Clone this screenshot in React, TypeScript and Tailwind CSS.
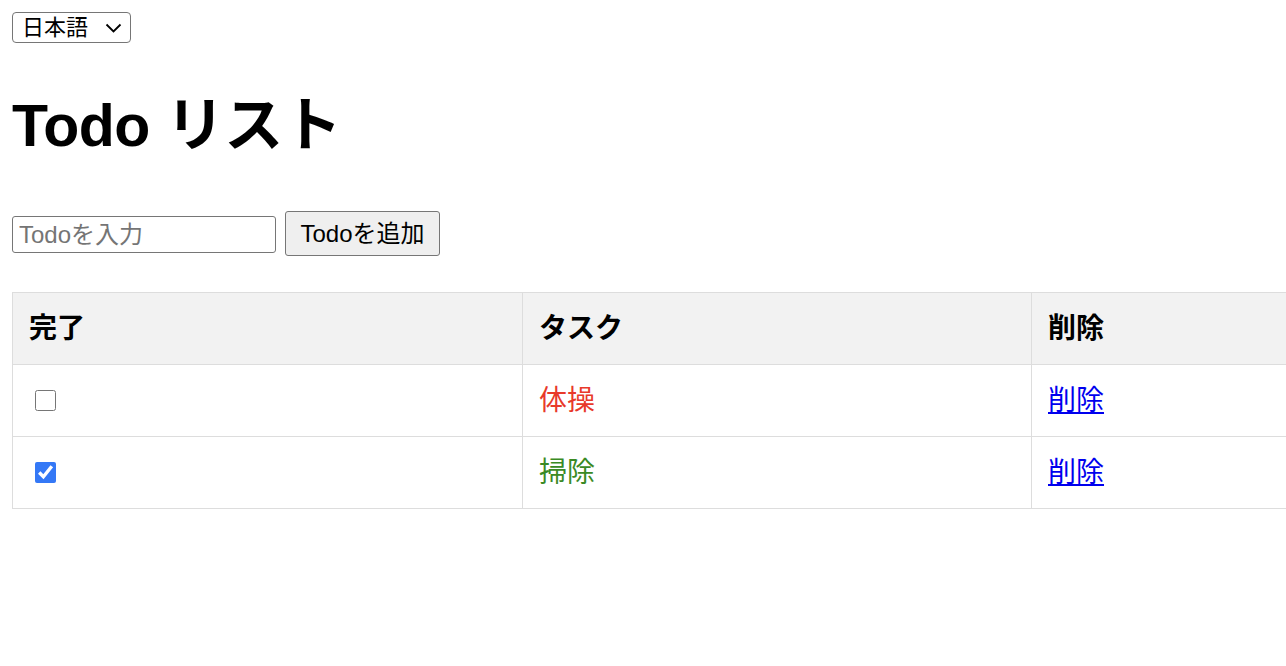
import { useState } from "react";

type Todo = {
  id: number;
  task: string;
  done: boolean;
};

const initialTodos: Todo[] = [
  { id: 1, task: "体操", done: false },
  { id: 2, task: "掃除", done: true },
];

const font = "font-['Liberation_Sans','Noto_Sans_CJK_JP',sans-serif]";

export default function App() {
  const [todos, setTodos] = useState<Todo[]>(initialTodos);
  const [text, setText] = useState("");

  const toggle = (id: number) =>
    setTodos(todos.map((t) => (t.id === id ? { ...t, done: !t.done } : t)));

  return (
    <div className={`w-full overflow-hidden bg-white text-black ${font}`}>
      <div className="pl-3 pt-3 pb-10">
        <div className="relative inline-block">
          <select className="appearance-none h-[31px] w-[119px] rounded-[4px] border border-[#767676] bg-white pl-[9px] text-[22px] leading-[29px] text-black">
            <option>日本語</option>
            <option>English</option>
          </select>
          <svg
            className="pointer-events-none absolute right-[9px] top-[11px]"
            width="17"
            height="10"
            viewBox="0 0 17 10"
            fill="none"
          >
            <path d="M1.5 1.5 L8.5 8.5 L15.5 1.5" stroke="#000" strokeWidth="1.8" />
          </svg>
        </div>

        <h1 className="mt-[51px] mb-0 text-[59px] leading-[64px] font-bold tracking-[-0.5px]">
          Todo リスト
        </h1>

        <div className="mt-[53px] flex items-center gap-[9px]">
          <input
            value={text}
            onChange={(e) => setText(e.target.value)}
            placeholder="Todoを入力"
            className="mt-[2px] h-[37px] w-[264px] rounded-[3px] border border-[#767676] px-[6px] text-[24px] placeholder:text-[#757575] outline-none"
          />
          <button className="h-[45px] w-[155px] rounded-[3px] border border-[#767676] bg-[#efefef] text-[24px] text-black">
            Todoを追加
          </button>
        </div>

        <table className="mt-[36px] w-[1530px] table-fixed border-collapse text-[28px]">
          <colgroup>
            <col className="w-[510px]" />
            <col className="w-[509px]" />
            <col className="w-[511px]" />
          </colgroup>
          <thead>
            <tr className="bg-[#f2f2f2]">
              <th className="h-[72px] border border-[#dddddd] px-4 text-left font-bold">完了</th>
              <th className="h-[72px] border border-[#dddddd] px-4 text-left font-bold">タスク</th>
              <th className="h-[72px] border border-[#dddddd] px-4 text-left font-bold">削除</th>
            </tr>
          </thead>
          <tbody>
            {todos.map((t) => (
              <tr key={t.id}>
                <td className="h-[72px] border border-[#dddddd] px-4">
                  <input
                    type="checkbox"
                    checked={t.done}
                    onChange={() => toggle(t.id)}
                    className="ml-[6px] block h-[21px] w-[21px] accent-[#3478f6]"
                  />
                </td>
                <td
                  className={`h-[72px] border border-[#dddddd] px-4 ${
                    t.done ? "text-[#3a8a24]" : "text-[#e8392a]"
                  }`}
                >
                  {t.task}
                </td>
                <td className="h-[72px] border border-[#dddddd] px-4">
                  <a href="#" className="text-[#0000ee] underline">
                    削除
                  </a>
                </td>
              </tr>
            ))}
          </tbody>
        </table>
      </div>
    </div>
  );
}
